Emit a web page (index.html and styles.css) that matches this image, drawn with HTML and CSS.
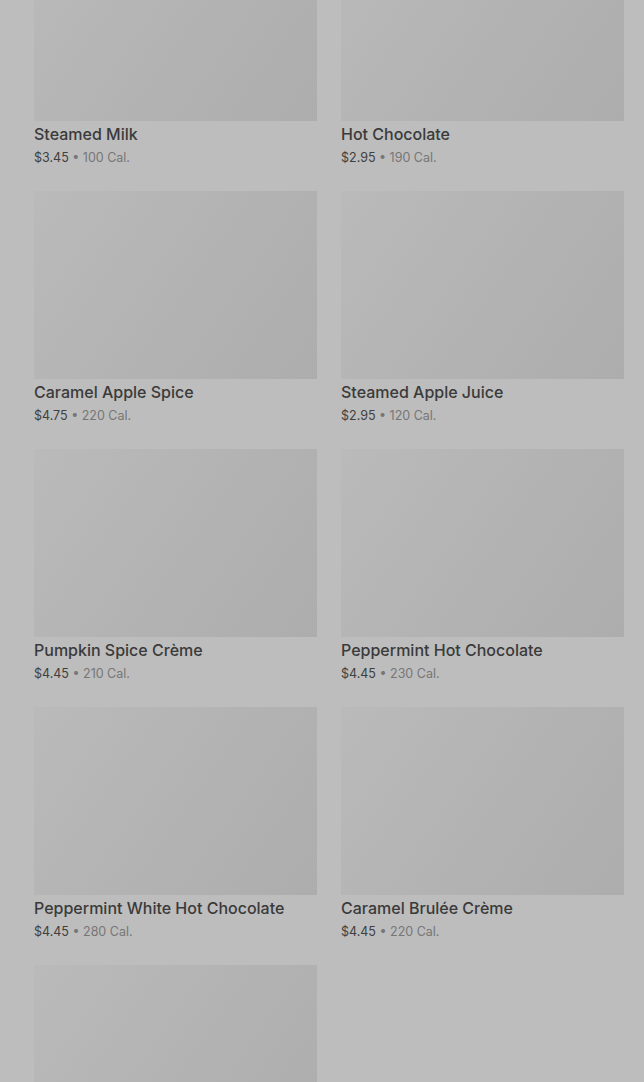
FILE: index.html
```html
<!DOCTYPE html>
<html lang="en">
<head>
    <meta charset="UTF-8">
    <meta name="viewport" content="width=device-width, initial-scale=1.0">
    <title>Menu - Hot Drinks</title>
    <link rel="stylesheet" href="styles.css">
</head>
<body>
    <!-- Product grid (dimmed behind overlay) -->
    <section class="menu-grid">
        <div class="product">
            <div class="product-img"></div>
            <div class="product-info">
                <h3>Steamed Milk</h3>
                <p><span class="price">$3.45</span> • 100 Cal.</p>
            </div>
        </div>
        <div class="product">
            <div class="product-img"></div>
            <div class="product-info">
                <h3>Hot Chocolate</h3>
                <p><span class="price">$2.95</span> • 190 Cal.</p>
            </div>
        </div>
        <div class="product">
            <div class="product-img"></div>
            <div class="product-info">
                <h3>Caramel Apple Spice</h3>
                <p><span class="price">$4.75</span> • 220 Cal.</p>
            </div>
        </div>
        <div class="product">
            <div class="product-img"></div>
            <div class="product-info">
                <h3>Steamed Apple Juice</h3>
                <p><span class="price">$2.95</span> • 120 Cal.</p>
            </div>
        </div>
        <div class="product">
            <div class="product-img"></div>
            <div class="product-info">
                <h3>Pumpkin Spice Crème</h3>
                <p><span class="price">$4.45</span> • 210 Cal.</p>
            </div>
        </div>
        <div class="product">
            <div class="product-img"></div>
            <div class="product-info">
                <h3>Peppermint Hot Chocolate</h3>
                <p><span class="price">$4.45</span> • 230 Cal.</p>
            </div>
        </div>
        <div class="product">
            <div class="product-img"></div>
            <div class="product-info">
                <h3>Peppermint White Hot Chocolate</h3>
                <p><span class="price">$4.45</span> • 280 Cal.</p>
            </div>
        </div>
        <div class="product">
            <div class="product-img"></div>
            <div class="product-info">
                <h3>Caramel Brulée Crème</h3>
                <p><span class="price">$4.45</span> • 220 Cal.</p>
            </div>
        </div>
        <!-- next item, only its picture is on screen -->
        <div class="product">
            <div class="product-img"></div>
        </div>
    </section>
</body>
</html>
```

FILE: styles.css
```css
/* General styles */
body {
    font-family: 'Inter', 'Roboto', sans-serif;
    background: #bdbdbd; /* page under the grey overlay */
    margin: 0;
    padding: 0;
    color: #3a3a3a;
    overflow: hidden;
}

/* Product grid */
.menu-grid {
    display: grid;
    grid-template-columns: 283px 283px;
    column-gap: 24px;
    row-gap: 24px;
    padding: 0 20px 0 34px;
    margin-top: -67px; /* page is scrolled */
}

.product-img {
    height: 188px;
    background: linear-gradient(125deg, #bababa 0%, #b3b3b3 50%, #adadad 100%);
}

.product-info {
    padding-top: 3px;
}

.product-info h3 {
    margin: 0;
    font-size: 16px;
    font-weight: 500;
    line-height: 20px;
    color: #3a3a3a;
}

.product-info p {
    margin: 5px 0 0;
    font-size: 12.5px;
    line-height: 18px;
    color: #767676;
}

.price {
    color: #3f3f3f;
}
```
